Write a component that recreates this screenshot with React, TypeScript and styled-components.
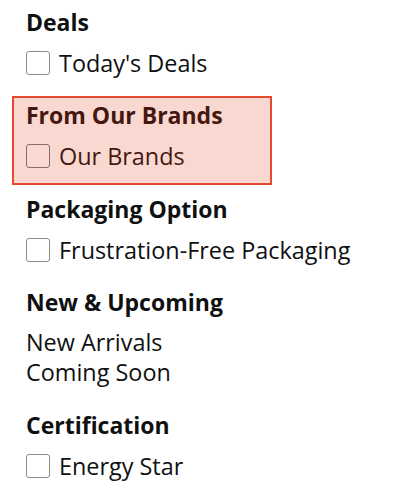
import React from 'react'
import styled, { createGlobalStyle } from 'styled-components'

const GlobalStyle = createGlobalStyle`
  html, body {
    margin: 0;
    padding: 0;
    background: #ffffff;
  }
  body {
    font-family: 'Open Sans', 'Liberation Sans', sans-serif;
    color: #0f1111;
  }
`

const Page = styled.div`
  display: flex;
  flex-direction: column;
  padding: 6.5px 0 0 26px;
`

const Section = styled.section<{ $highlight?: boolean }>`
  display: flex;
  flex-direction: column;
  gap: 11px;
  width: 370px;
  margin-bottom: 22.5px;
  color: #0f1111;

  ${({ $highlight }) =>
    $highlight &&
    `
    width: 232px;
    margin: -4px 0 8.5px -14px;
    padding: 2px 12px 12px;
    border: 2px solid #e5492f;
    background: #f9d8d2;
    color: #45170f;
  `}
`

const Heading = styled.h3`
  margin: 0;
  font-size: 23px;
  line-height: 30px;
  font-weight: 700;
  color: inherit;
`

const CheckRow = styled.label`
  display: flex;
  align-items: center;
  gap: 9px;
  height: 30px;
  font-size: 23.4px;
  line-height: 30px;
  color: inherit;
`

const Box = styled.span<{ $tinted?: boolean }>`
  width: 22px;
  height: 22px;
  border: 1px solid ${({ $tinted }) => ($tinted ? '#8c6a64' : '#888c8c')};
  border-radius: 3px;
  background: ${({ $tinted }) => ($tinted ? '#f9d8d2' : '#ffffff')};
  flex-shrink: 0;
`

const LinkList = styled.div`
  display: flex;
  flex-direction: column;
  margin-top: -1px;
`

const LinkItem = styled.div`
  font-size: 23.4px;
  line-height: 30px;
  color: #0f1111;
`

export default function App() {
  return (
    <>
      <GlobalStyle />
      <Page>
        <Section>
          <Heading>Deals</Heading>
          <CheckRow>
            <Box />
            Today's Deals
          </CheckRow>
        </Section>
        <Section $highlight>
          <Heading>From Our Brands</Heading>
          <CheckRow>
            <Box $tinted />
            Our Brands
          </CheckRow>
        </Section>
        <Section>
          <Heading>Packaging Option</Heading>
          <CheckRow>
            <Box />
            Frustration-Free Packaging
          </CheckRow>
        </Section>
        <Section>
          <Heading>New &amp; Upcoming</Heading>
          <LinkList>
            <LinkItem>New Arrivals</LinkItem>
            <LinkItem>Coming Soon</LinkItem>
          </LinkList>
        </Section>
        <Section>
          <Heading>Certification</Heading>
          <CheckRow>
            <Box />
            Energy Star
          </CheckRow>
        </Section>
      </Page>
    </>
  )
}
